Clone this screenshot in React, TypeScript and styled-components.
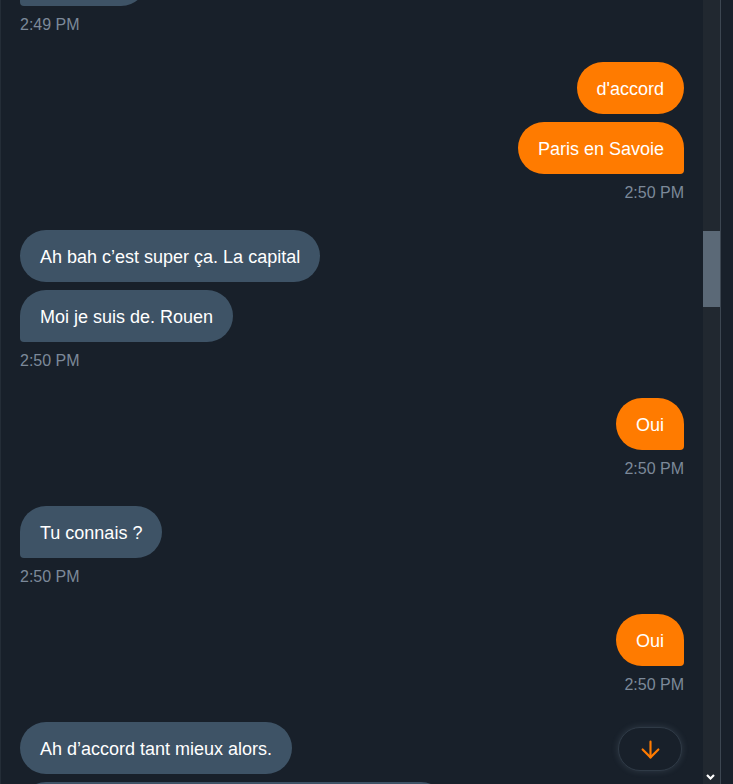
import React, { useLayoutEffect, useRef } from 'react';
import styled, { createGlobalStyle, css } from 'styled-components';
import { ArrowDown } from 'lucide-react';

type Sender = 'me' | 'them';

interface Group {
  from: Sender;
  time: string;
  lines: string[];
}

const GlobalStyle = createGlobalStyle`
  html, body, #root {
    height: 100%;
  }
  body {
    margin: 0;
    overflow: hidden;
    background: #18202a;
    font-family: 'Liberation Sans', Arial, sans-serif;
  }
  * {
    box-sizing: border-box;
  }
`;

const Page = styled.div`
  display: flex;
  height: 100vh;
`;

const ChatPanel = styled.section`
  position: relative;
  display: flex;
  width: 721px;
  height: 100%;
  background: #18202a;
  border-left: 1px solid #242d37;
  border-right: 1px solid #3c4651;
`;

const MessageList = styled.div`
  position: relative;
  display: flex;
  flex: 1;
  flex-direction: column;
  gap: 27px;
  height: 100%;
  padding: 20px 19px;
  overflow: hidden;
`;

const ScrollRail = styled.div`
  display: flex;
  flex: none;
  flex-direction: column;
  width: 17px;
  padding-top: 231px;
  background: #212830;
`;

const ScrollThumb = styled.div`
  height: 76px;
  background: #5b6977;
`;

const ScrollArrow = styled.div`
  display: flex;
  align-items: center;
  justify-content: center;
  height: 17px;
  margin-top: auto;
  padding: 3px 2px 0 0;
  color: #ffffff;
`;

const MessageGroup = styled.div<{ $mine: boolean }>`
  display: flex;
  flex-direction: column;
  align-items: ${(p) => (p.$mine ? 'flex-end' : 'flex-start')};
  gap: 8px;
`;

const Bubble = styled.div<{ $mine: boolean; $last: boolean }>`
  max-width: 72%;
  padding: 15px 20px 13px;
  border-radius: 26px;
  background: ${(p) => (p.$mine ? '#ff7b00' : '#3e5366')};
  color: #ffffff;
  font-size: 18px;
  line-height: 24px;
  white-space: nowrap;
  ${(p) =>
    p.$last &&
    (p.$mine
      ? css`border-bottom-right-radius: 4px;`
      : css`border-bottom-left-radius: 4px;`)}
`;

const Time = styled.span`
  padding-top: 1px;
  color: #7c8999;
  font-size: 16px;
  line-height: 20px;
`;

const JumpButton = styled.button`
  position: absolute;
  right: 38px;
  bottom: 13px;
  display: flex;
  align-items: center;
  justify-content: center;
  width: 64px;
  height: 44px;
  padding: 0;
  border: 1px solid #2f3a46;
  border-radius: 22px;
  background: #18202a;
  box-shadow: 0 0 7px rgba(150, 170, 190, 0.2);
  color: #ff7b00;
  cursor: pointer;
`;

const messages: Group[] = [
  { from: 'them', time: '2:49 PM', lines: ["T'es d'où ?"] },
  { from: 'me', time: '2:50 PM', lines: ["d'accord", 'Paris en Savoie'] },
  { from: 'them', time: '2:50 PM', lines: ['Ah bah c’est super ça. La capital', 'Moi je suis de. Rouen'] },
  { from: 'me', time: '2:50 PM', lines: ['Oui'] },
  { from: 'them', time: '2:50 PM', lines: ['Tu connais ?'] },
  { from: 'me', time: '2:50 PM', lines: ['Oui'] },
  {
    from: 'them',
    time: '2:51 PM',
    lines: ['Ah d’accord tant mieux alors.', 'Et sinon, tu fais quoi dans la vie en ce moment ?']
  }
];

// the list is scrolled so that the "d'accord" group sits 62px below the top edge
const ANCHOR_INDEX = 1;
const ANCHOR_OFFSET = 62;

function ChatGroup ({ group, anchorRef }: { group: Group; anchorRef?: React.Ref<HTMLDivElement> }) {
  const mine = group.from === 'me';

  return (
    <MessageGroup $mine={mine} ref={anchorRef}>
      {group.lines.map((line, i) => (
        <Bubble $last={i === group.lines.length - 1} $mine={mine} key={i}>
          {line}
        </Bubble>
      ))}
      <Time>{group.time}</Time>
    </MessageGroup>
  );
}

export default function App () {
  const listRef = useRef<HTMLDivElement>(null);
  const anchorRef = useRef<HTMLDivElement>(null);

  useLayoutEffect(() => {
    if (listRef.current && anchorRef.current) {
      listRef.current.scrollTop = anchorRef.current.offsetTop - ANCHOR_OFFSET;
    }
  }, []);

  const jumpToEnd = () => {
    const list = listRef.current;

    if (list) {
      list.scrollTop = list.scrollHeight;
    }
  };

  return (
    <>
      <GlobalStyle />
      <Page>
        <ChatPanel>
          <MessageList ref={listRef}>
            {messages.map((g, i) => (
              <ChatGroup anchorRef={i === ANCHOR_INDEX ? anchorRef : undefined} group={g} key={i} />
            ))}
          </MessageList>
          <ScrollRail>
            <ScrollThumb />
            <ScrollArrow>
              <svg height='6' viewBox='0 0 9 6' width='9'>
                <path d='M1 1 L4.5 4.5 L8 1' fill='none' stroke='currentColor' strokeWidth='2.2' />
              </svg>
            </ScrollArrow>
          </ScrollRail>
          <JumpButton aria-label='Aller en bas' onClick={jumpToEnd}>
            <ArrowDown size={27} strokeWidth={1.9} />
          </JumpButton>
        </ChatPanel>
      </Page>
    </>
  );
}
